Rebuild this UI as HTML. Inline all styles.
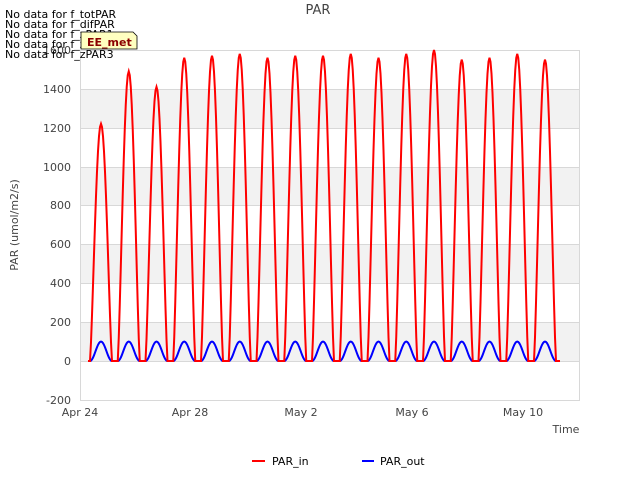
<!DOCTYPE html>
<html><head><style>
body{margin:0;background:#fff;font-family:"Liberation Sans","DejaVu Sans",sans-serif;}
</style></head><body>
<svg id="s" width="640" height="480" xmlns="http://www.w3.org/2000/svg" font-family="DejaVu Sans, Liberation Sans, sans-serif">
<rect x="0" y="0" width="640" height="480" fill="#fff"/>
<rect x="80" y="89" width="500" height="39" fill="#f2f2f2"/>
<rect x="80" y="167" width="500" height="38" fill="#f2f2f2"/>
<rect x="80" y="244" width="500" height="39" fill="#f2f2f2"/>
<rect x="80" y="322" width="500" height="39" fill="#f2f2f2"/>
<g stroke="#d8d8d8" stroke-width="1">
<line x1="80" y1="50.5" x2="580" y2="50.5"/><line x1="80" y1="89.5" x2="580" y2="89.5"/>
<line x1="80" y1="128.5" x2="580" y2="128.5"/><line x1="80" y1="167.5" x2="580" y2="167.5"/>
<line x1="80" y1="205.5" x2="580" y2="205.5"/><line x1="80" y1="244.5" x2="580" y2="244.5"/>
<line x1="80" y1="283.5" x2="580" y2="283.5"/><line x1="80" y1="322.5" x2="580" y2="322.5"/>
<line x1="80" y1="361.5" x2="580" y2="361.5"/>
<line x1="80.5" y1="50" x2="80.5" y2="400"/><line x1="579.5" y1="50" x2="579.5" y2="400"/>
<line x1="80" y1="400.5" x2="580" y2="400.5"/>
</g>
<g font-size="11" fill="#444" text-anchor="end">
<text x="71" y="54">1600</text><text x="71" y="93">1400</text><text x="71" y="132">1200</text>
<text x="71" y="171">1000</text><text x="71" y="209">800</text><text x="71" y="248">600</text>
<text x="71" y="287">400</text><text x="71" y="326">200</text><text x="71" y="365">0</text>
<text x="71" y="404">-200</text>
</g>
<g font-size="11" fill="#444" text-anchor="middle">
<text x="80" y="416">Apr 24</text><text x="190" y="416">Apr 28</text><text x="301" y="416">May 2</text>
<text x="412" y="416">May 6</text><text x="523" y="416">May 10</text>
</g>
<text x="566" y="433" font-size="11" fill="#444" text-anchor="middle">Time</text>
<text x="318" y="14" font-size="13" fill="#444" text-anchor="middle">PAR</text>
<text transform="translate(18,225) rotate(-90)" font-size="11" fill="#444" text-anchor="middle">PAR (umol/m2/s)</text>
<path id="blue" fill="none" stroke="#0000ff" stroke-width="2"/>
<path id="red" fill="none" stroke="#ff0000" stroke-width="2"/>
<g font-size="11" fill="#000">
<text x="5" y="18">No data for f_totPAR</text>
<text x="5" y="28">No data for f_difPAR</text>
<text x="5" y="38">No data for f_zPAR1</text>
<text x="5" y="48">No data for f_zPAR2</text>
<text x="5" y="58">No data for f_zPAR3</text>
</g>
<path d="M81,32 H133 L137,36 V49 H81 Z" fill="#ffffc0" stroke="#000" stroke-width="0.8"/>
<text x="87" y="46" font-size="11" font-weight="bold" fill="#8b0000">EE_met</text>
<line x1="252" y1="461" x2="265" y2="461" stroke="#ff0000" stroke-width="2"/>
<text x="272" y="465" font-size="11" fill="#000">PAR_in</text>
<line x1="362" y1="461" x2="374" y2="461" stroke="#0000ff" stroke-width="2"/>
<text x="380" y="465" font-size="11" fill="#000">PAR_out</text>
</svg>
<script>
var peaks=[1220,1490,1410,1560,1570,1580,1560,1570,1570,1580,1560,1580,1600,1550,1560,1580,1550];
function y(v){return 361-v*0.1944;}
var r="M88,"+y(0),b="M88,"+y(0);
for(var i=0;i<peaks.length;i++){
 var c=101+i*27.75;
 r+=" L"+(c-11)+","+y(0);b+=" L"+(c-11)+","+y(0);
 for(var k=0;k<=22;k++){var t=k/22,x=c-11+k;
  var sv=Math.sin(Math.PI*t);
  r+=" L"+x+","+y(peaks[i]*Math.pow(sv,1.3));
  b+=" L"+x+","+y(100*Math.pow(sv,2));}
}
r+=" L560,"+y(0);b+=" L560,"+y(0);
document.getElementById("red").setAttribute("d",r);
document.getElementById("blue").setAttribute("d",b);
</script>
</body></html>
